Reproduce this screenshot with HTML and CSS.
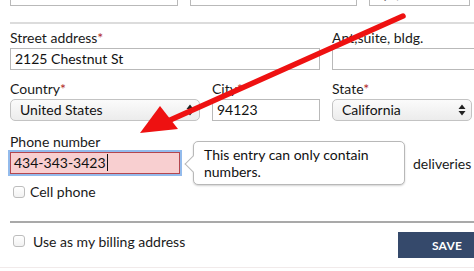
FILE: index.html
```html
<!DOCTYPE html>
<html>
<head>
<meta charset="utf-8">
<link rel="stylesheet" href="styles.css">
</head>
<body>
<div class="page">
  <div class="top-row">
    <div class="input">Smith</div>
    <div class="input">Norman</div>
    <div class="input">Apt, suite</div>
  </div>
  <div class="divider light"></div>

  <div class="grid">
    <div class="field span2">
      <label class="lbl">Street address<span class="req">*</span></label>
      <div class="input">2125 Chestnut St</div>
    </div>
    <div class="field">
      <label class="lbl">Apt,suite, bldg.</label>
      <div class="input wide"></div>
    </div>

    <div class="field row2">
      <label class="lbl">Country<span class="req">*</span></label>
      <div class="select">United States
        <svg class="arrows" width="8" height="12" viewBox="0 0 8 12"><path d="M4 0.5 L7.5 5 L0.5 5 Z M4 11.5 L7.5 7 L0.5 7 Z" fill="#222"/></svg>
      </div>
    </div>
    <div class="field row2">
      <label class="lbl">City<span class="req">*</span></label>
      <div class="input">94123</div>
    </div>
    <div class="field row2">
      <label class="lbl">State<span class="req">*</span></label>
      <div class="select">California
        <svg class="arrows" width="8" height="12" viewBox="0 0 8 12"><path d="M4 0.5 L7.5 5 L0.5 5 Z M4 11.5 L7.5 7 L0.5 7 Z" fill="#222"/></svg>
      </div>
    </div>
  </div>

  <div class="phone-block">
    <label class="lbl">Phone number</label>
    <div class="phone-row">
      <div class="input error">434-343-3423<span class="caret"></span></div>
      <span class="deliveries">deliveries</span>
      <div class="tooltip">
        <span class="tip-arrow"></span>
        This entry can only contain numbers.
      </div>
    </div>
  </div>

  <div class="check-row cell">
    <span class="checkbox"></span>
    <span class="check-label">Cell phone</span>
  </div>

  <div class="divider dark"></div>

  <div class="footer">
    <div class="check-row billing">
      <span class="checkbox"></span>
      <span class="check-label">Use as my billing address</span>
    </div>
    <button class="save">SAVE</button>
  </div>
  <div class="bottom-line"></div>

  <svg class="annot" width="474" height="271" viewBox="0 0 474 271">
    <line x1="403" y1="16" x2="168" y2="121" stroke="#ee1111" stroke-width="5.5" stroke-linecap="round"/>
    <polygon points="140,133 160,106 178,129" fill="#ee1111"/>
  </svg>
</div>
</body>
</html>
```

FILE: styles.css
```css
* { box-sizing: border-box; }
html, body { margin: 0; padding: 0; background: #fff; }
body {
  font-family: Lato, "Open Sans", sans-serif;
  color: #1a1a1a;
  width: 474px;
  height: 271px;
  overflow: hidden;
}
.page {
  position: relative;
  padding-left: 10px;
  height: 271px;
  overflow: hidden;
}
.top-row {
  display: grid;
  grid-template-columns: 168px 167px 101px;
  column-gap: 12px;
  margin-top: -17px;
}
.input {
  height: 22px;
  border: 1px solid #b9b9b9;
  background: #fff;
  font-size: 14px;
  line-height: 20px;
  padding-left: 4px;
  white-space: nowrap;
  overflow: hidden;
  color: #111;
}
.top-row .input { height: 23px; color: #777; }
.divider { margin-right: -10px; }
.divider.light {
  margin-top: 16px;
  border-top: 2px solid #dcdcdc;
}
.grid {
  display: grid;
  grid-template-columns: 190px 108px 140px;
  column-gap: 12px;
}
.field { display: flex; flex-direction: column; padding-top: 5px; }
.field.span2 { grid-column: 1 / 3; }
.field.row2 { padding-top: 10px; }
.lbl {
  display: block;
  font-size: 14px;
  line-height: 17px;
  color: #1a1a1a;
  white-space: nowrap;
}
.req { color: #b22a2a; }
.field .input, .field .select { margin-top: 2px; }
.input.wide { width: 160px; }
.select {
  position: relative;
  height: 22px;
  border: 1px solid #c3c3c3;
  border-radius: 5px;
  background: linear-gradient(#fbfbfb, #ececec);
  font-size: 14px;
  line-height: 20px;
  padding-left: 9px;
  color: #111;
}
.select .arrows {
  position: absolute;
  right: 5px;
  top: 4px;
}
.phone-block { padding-top: 12px; }
.phone-row {
  position: relative;
  display: flex;
  align-items: center;
  margin-top: 1px;
}
.input.error {
  width: 170px;
  height: 22px;
  background: #f8cfd0;
  border: 1px solid #b4464e;
  box-shadow: 0 0 0 2px #93bbec;
  position: relative;
  padding-left: 3px;
  margin-top: 1px;
}
.caret {
  display: inline-block;
  width: 1px;
  height: 17px;
  background: #111;
  vertical-align: -3px;
  margin-left: 1px;
}
.deliveries {
  margin-left: 233px;
  font-size: 14px;
  line-height: 17px;
  margin-top: 2px;
}
.tooltip {
  position: absolute;
  left: 183px;
  top: -10px;
  width: 212px;
  height: 44px;
  border: 1px solid #b8b8b8;
  border-radius: 5px;
  background: #fff;
  box-shadow: 0 1px 2px rgba(0,0,0,0.18);
  font-size: 14px;
  line-height: 17px;
  padding: 4px 10px 0 10px;
  color: #111;
}
.tip-arrow {
  position: absolute;
  left: -7px;
  top: 16px;
  width: 12px;
  height: 12px;
  background: #fff;
  border-left: 1px solid #b8b8b8;
  border-bottom: 1px solid #b8b8b8;
  transform: rotate(45deg);
}
.check-row {
  display: flex;
  align-items: center;
  font-size: 14px;
  line-height: 17px;
}
.cell { margin-top: 9px; }
.checkbox {
  display: inline-block;
  width: 12px;
  height: 12px;
  border: 1px solid #bdbdbd;
  border-radius: 3px;
  background: linear-gradient(#fff, #f2f2f2);
  margin-left: 3px;
}
.cell .check-label { margin-left: 5px; }
.divider.dark {
  margin-top: 21px;
  border-top: 2px solid #a9a9a9;
}
.footer {
  display: flex;
  justify-content: space-between;
  align-items: flex-start;
  margin-top: 9px;
}
.billing { margin-top: 0; height: 17px; padding-top: 1px; }
.billing .check-label { margin-left: 8px; }
.save {
  width: 98px;
  height: 26px;
  margin-right: -22px;
  border: none;
  background: #35496b;
  color: #fff;
  font-family: Lato, "Open Sans", sans-serif;
  font-weight: 700;
  font-size: 12px;
  letter-spacing: 0.2px;
  padding: 0;
}
.bottom-line {
  margin-top: 9px;
  margin-left: -10px;
  border-top: 1px solid #f1eaea;
}
.annot {
  position: absolute;
  left: 0;
  top: 0;
  pointer-events: none;
}
```
